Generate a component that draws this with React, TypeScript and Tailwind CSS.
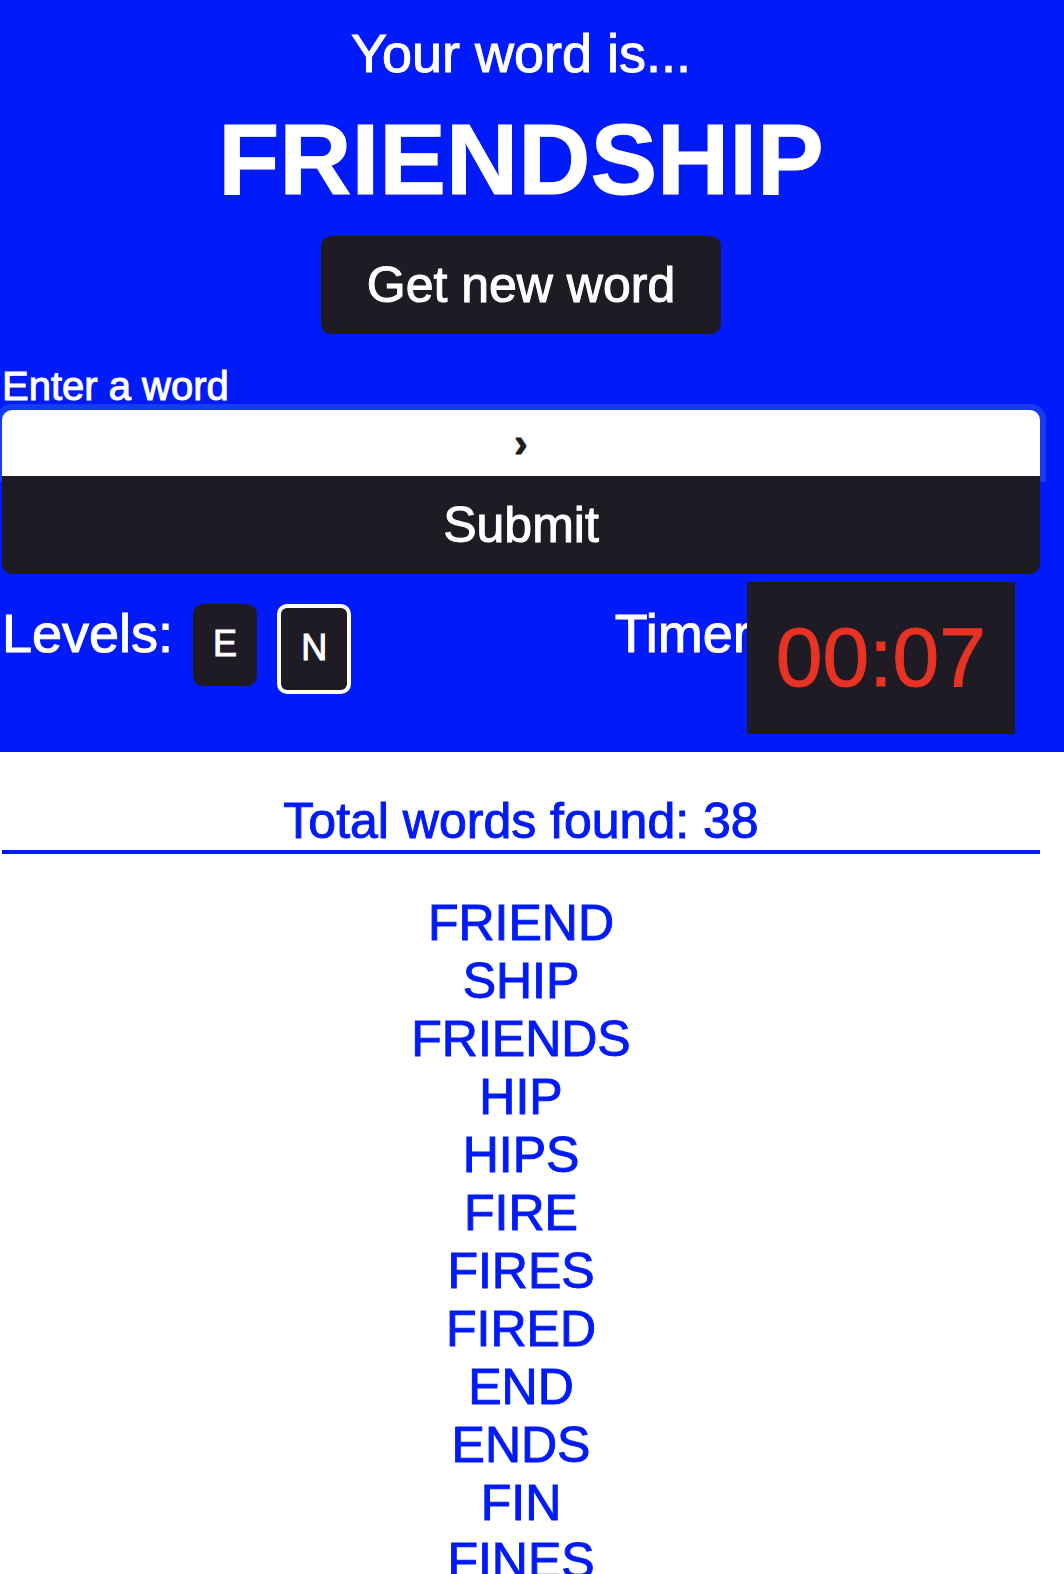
import { useState } from "react";

const words = [
  "FRIEND",
  "SHIP",
  "FRIENDS",
  "HIP",
  "HIPS",
  "FIRE",
  "FIRES",
  "FIRED",
  "END",
  "ENDS",
  "FIN",
  "FINES",
];

export default function App() {
  const [entry, setEntry] = useState("›");

  return (
    <div className="h-screen overflow-hidden bg-white font-['Liberation_Sans',Arial,sans-serif] [-webkit-text-stroke-width:1px]">
      <header className="flex flex-col bg-[#001bf7] pt-[22px] pr-6 pb-[18px] pl-0.5 text-white">
        <p className="text-center text-[54px] leading-[62px]">Your word is...</p>
        <h1 className="mt-[18px] text-center text-[100px] leading-[115px] font-bold">FRIENDSHIP</h1>
        <button
          type="button"
          className="mt-[19px] self-center rounded-[10px] bg-[#1e1b25] px-[46px] py-5 text-[50px] leading-[58px]"
        >
          Get new word
        </button>

        <form className="mt-[29px] flex flex-col" onSubmit={(e) => e.preventDefault()}>
          <label htmlFor="word" className="text-[40px] leading-[46px]">
            Enter a word
          </label>
          <input
            id="word"
            type="text"
            value={entry}
            onChange={(e) => setEntry(e.target.value)}
            className="mt-px h-[66px] w-full rounded-t-[10px] bg-white text-center text-[40px] font-bold text-[#1e1b25] shadow-[0_0_0_6px_#163cf0] outline-none"
          />
          <button
            type="submit"
            className="relative rounded-b-[10px] bg-[#1e1b25] py-5 text-[50px] leading-[58px]"
          >
            Submit
          </button>
        </form>

        <div className="mt-2 flex items-start justify-between pr-[25px]">
          <div className="flex items-start gap-5 pt-5">
            <span className="text-[54px] leading-[62px]">Levels:</span>
            <button
              type="button"
              className="mt-0.5 rounded-[10px] bg-[#1e1b25] px-5 pt-[19px] pb-[21px] text-[36px] leading-[42px]"
            >
              E
            </button>
            <button
              type="button"
              className="mt-0.5 rounded-[10px] border-4 border-white bg-[#1e1b25] px-5 pt-[19px] pb-[21px] text-[36px] leading-[42px]"
            >
              N
            </button>
          </div>
          <div className="flex items-start">
            <span className="w-[132px] pt-5 text-[54px] leading-[62px]">Timer</span>
            <time className="relative bg-[#1e1b25] px-[29px] pt-[26px] pb-7 text-[84px] leading-[98px] text-[#e63323]">
              00:07
            </time>
          </div>
        </div>
      </header>

      <main className="pt-10 pr-6 pl-0.5 text-center text-[50px] leading-[58px] text-[#001bf7]">
        <h2 className="border-b-4 border-[#001bf7]">Total words found: 38</h2>
        <ul className="mt-10">
          {words.map((word) => (
            <li key={word}>{word}</li>
          ))}
        </ul>
      </main>
    </div>
  );
}
